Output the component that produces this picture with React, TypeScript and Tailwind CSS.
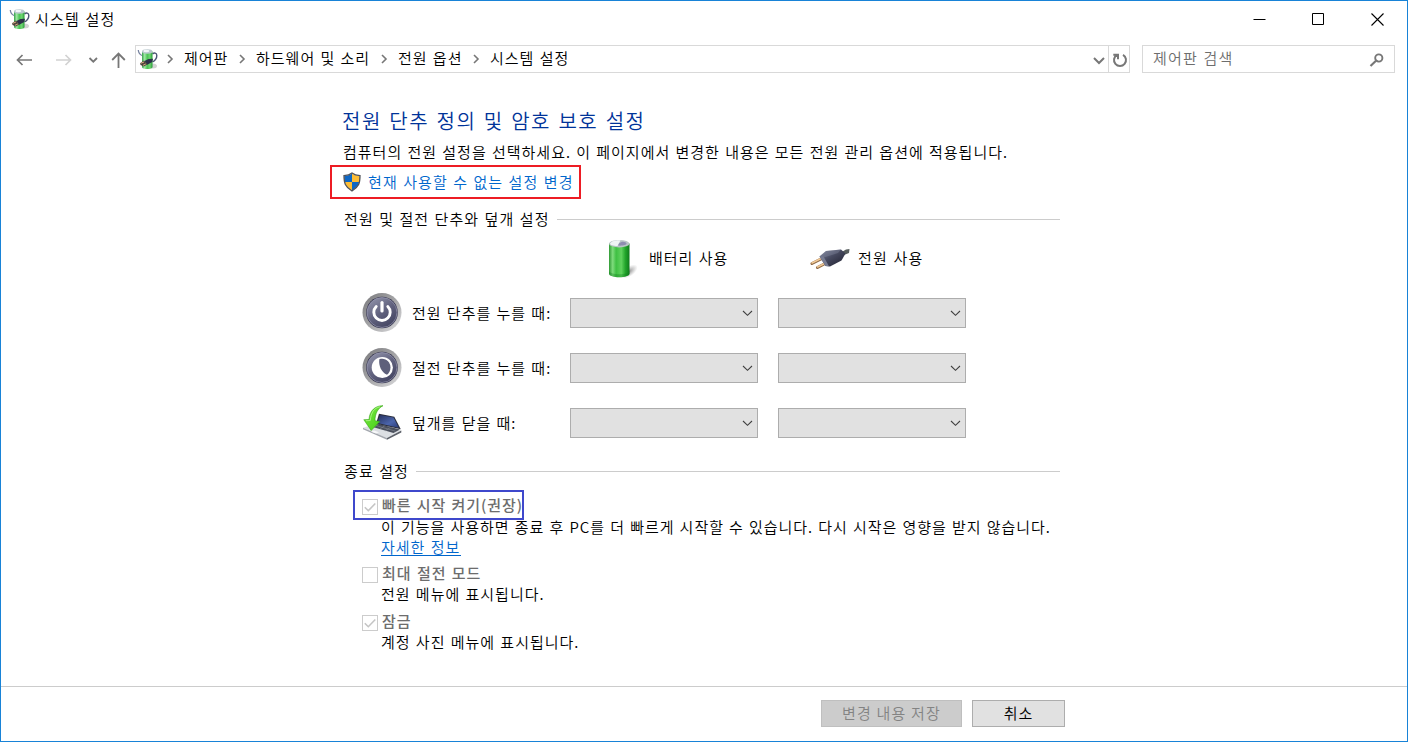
import React from 'react';

function Battery({ className }: { className?: string }) {
  return (
    <svg className={className} viewBox="0 0 32 40">
      <defs>
        <linearGradient id="bat" x1="0" x2="1">
          <stop offset="0" stopColor="#2f9a34" />
          <stop offset="0.18" stopColor="#7fdc7d" />
          <stop offset="0.35" stopColor="#3fc043" />
          <stop offset="0.6" stopColor="#5fd25d" />
          <stop offset="0.8" stopColor="#22a52b" />
          <stop offset="1" stopColor="#0f7a1c" />
        </linearGradient>
        <radialGradient id="batShadow">
          <stop offset="0" stopColor="#777" stopOpacity="0.8" />
          <stop offset="1" stopColor="#999" stopOpacity="0" />
        </radialGradient>
      </defs>
      <ellipse cx="22" cy="32.500" rx="10" ry="5" fill="url(#batShadow)" transform="rotate(-35 22 32.500)" />
      <path d="M2 4.500v30c0 5 20.500 5 20.500 0v-30z" fill="url(#bat)" />
      <path d="M2 34.500c0 5 20.500 5 20.500 0v-3c0 5-20.500 5-20.500 0z" fill="#128020" opacity=".35" />
      <ellipse cx="12.200" cy="4.700" rx="10.200" ry="3.700" fill="#b9c4c6" />
      <path d="M3 4.500C5 1 11 1 13.500 1.300l-3 5.700C6.500 7 3 6 3 4.500z" fill="#f0f4f5" />
      <path d="M12 4.500c3-3 7-1.500 7.500 0s-5 2.500-8.500 2z" fill="#8e8db0" />
    </svg>
  );
}

function Plug({ className }: { className?: string }) {
  return (
    <svg className={className} viewBox="0 0 40 24">
      <defs>
        <linearGradient id="plug" x1="0" y1="0" x2="1" y2="1">
          <stop offset="0" stopColor="#80859b" />
          <stop offset="0.45" stopColor="#46495f" />
          <stop offset="1" stopColor="#1d1e2c" />
        </linearGradient>
      </defs>
      <path d="M2 16.500 13 11M7.500 20.500 18 15" stroke="#8f6944" strokeWidth="3" strokeLinecap="round" />
      <path d="M2 16 12 11M7.500 20 17 15.200" stroke="#f0c997" strokeWidth="1.600" strokeLinecap="round" />
      <path d="M30 6 36 2.500 39.500 2 39 6 34 8z" fill="#565d5c" />
      <path d="M9.500 9.500 16 4 31 2.500 35.500 6.500 31.500 13.500 20 19.500 15.500 19z" fill="url(#plug)" />
      <path d="M9.500 9.500 16 4 31 2.500 28 6 14 10.500z" fill="#8a8fa5" opacity=".35" />
      <path d="M9.500 9.500 13.500 9.500 19 19.300 15.500 19z" fill="#777b91" />
    </svg>
  );
}

function PowerOptions({ className }: { className?: string }) {
  return (
    <svg className={className} viewBox="0 0 22 22">
      <defs>
        <linearGradient id="small" x1="0" x2="1">
          <stop offset="0" stopColor="#36a04a" />
          <stop offset="0.25" stopColor="#a0e8a4" />
          <stop offset="0.5" stopColor="#4cc455" />
          <stop offset="0.75" stopColor="#71d573" />
          <stop offset="1" stopColor="#239a35" />
        </linearGradient>
      </defs>
      <ellipse cx="15.500" cy="18" rx="4.500" ry="2.500" fill="#d2d2d2" />
      <path d="M1.300 2c.2 2.500 1.200 4.500 3.700 5.500" stroke="#7783a0" strokeWidth="1.300" fill="none" />
      <path d="M15.500 6c1.500-1.500 4.300-1.500 4.300 1.500 0 3-1.500 5-4.300 6.500" stroke="#4a5373" strokeWidth="1.400" fill="none" />
      <path d="M5 3.500v15.500c0 2.700 10.500 2.700 10.500 0V3.500z" fill="url(#small)" />
      <ellipse cx="10.200" cy="3.500" rx="5.200" ry="2.200" fill="#b9c7cd" />
      <ellipse cx="9.300" cy="3" rx="3" ry="1.200" fill="#f1f5f7" />
      <path d="m7.500 13 4-2 4.500-.3-.8 3.300-5 2.800z" fill="#2d3049" />
      <path d="M3 15.200 7 12.500l3.500 3.800L7 18.500l-3.500-1.500z" fill="#4f443e" />
      <path d="m3.700 15.300 3.300-1.300M6 17.300l2.800-1.300" stroke="#d9ae82" strokeWidth="1" />
    </svg>
  );
}

function RoundButton({ kind }: { kind: 'power' | 'sleep' }) {
  return (
    <svg className="size-10 shrink-0" viewBox="0 0 40 40">
      <defs>
        <linearGradient id="ring" x1="0" y1="0" x2="1" y2="1">
          <stop offset="0" stopColor="#77777a" />
          <stop offset="0.5" stopColor="#a5a5a7" />
          <stop offset="1" stopColor="#dedee0" />
        </linearGradient>
        <linearGradient id="face" x1="0.1" y1="0" x2="0.8" y2="1">
          <stop offset="0" stopColor="#9395ac" />
          <stop offset="0.5" stopColor="#62637f" />
          <stop offset="1" stopColor="#41425f" />
        </linearGradient>
      </defs>
      <circle cx="20" cy="19.500" r="19.500" fill="url(#ring)" />
      <circle cx="20" cy="19.500" r="15.800" fill="#303049" />
      <circle cx="20" cy="19.500" r="15" fill="url(#face)" stroke="#9b9bb5" strokeWidth=".7" />
      {kind === 'power' ? (
        <g fill="none" stroke="#fff" strokeLinecap="round">
          <path d="M14.200 13.500a8.200 8.200 0 1 0 11.600 0" strokeWidth="2.900" />
          <path d="M20 9.500v8.500" strokeWidth="3.200" />
        </g>
      ) : (
        <g>
          <circle cx="20.300" cy="19.500" r="10.600" fill="#fff" />
          <path d="M17.300 11.300c6-2 11 2.500 11.200 8 0 3.700-1.500 6-3.500 7.500C19.500 24.500 16.500 18 17.300 11.300z" fill="#5e607b" />
        </g>
      )}
    </svg>
  );
}

function Laptop() {
  return (
    <svg className="size-10 shrink-0" viewBox="0 0 40 40">
      <defs>
        <linearGradient id="screen" x1="0" y1="0" x2="1" y2="1">
          <stop offset="0" stopColor="#252f5b" />
          <stop offset="0.6" stopColor="#4b65ac" />
          <stop offset="1" stopColor="#2a3a78" />
        </linearGradient>
        <linearGradient id="arrow" x1="0" y1="0" x2="1" y2="1">
          <stop offset="0" stopColor="#7be84a" />
          <stop offset="1" stopColor="#43cf10" />
        </linearGradient>
      </defs>
      <path d="M1 24.700 14 20.500 39.300 27.500 25 35z" fill="#dcdfe3" />
      <path d="M1 24.700 25 35v1.800L1 26.200z" fill="#a3a7ae" />
      <path d="M25 35 39.300 27.500v2L25 36.800z" fill="#5c6069" />
      <path d="M15 20.500 38 26.500 31.500 30 9 23.500z" fill="#4a4f5c" />
      <path d="m12 22 21.500 6.200M17 21l-4 2.500m10-1-5 3.500m11-2-6 4" stroke="#8e949f" strokeWidth=".5" />
      <path d="m12 27.500 5 1.700-3 1.300-5-1.700z" fill="#f7f8f9" />
      <path d="M17 10.800 32.300 13.800 38.800 26.300 14 20.800z" fill="#2b2e3c" />
      <path d="M18 11.900 31.500 14.500 36.800 24.800 15.500 20z" fill="url(#screen)" />
      <path d="M21 2.700C13.500 2.500 7.500 7.500 7 16.500L1.800 16.700 9.200 27.500 17.800 18.500 13 17.700C13 11 15.500 5.500 21 2.700z" fill="url(#arrow)" stroke="#39a51a" strokeWidth=".6" />
      <path d="M18 3.800C12 5 9 9.500 8.300 17.500l-4.300.2" stroke="#a9f585" strokeWidth=".9" fill="none" />
    </svg>
  );
}

function Shield() {
  return (
    <svg className="h-5 w-[18px] shrink-0" viewBox="0 0 18 20">
      <clipPath id="half"><path d="M9 1.500C7 3 4 3.700 1.300 3.900c0 7 1 10.500 7.700 14.600 6.700-4.100 7.700-7.600 7.700-14.600C14 3.700 11 3 9 1.500z" /></clipPath>
      <g clipPath="url(#half)">
        <path d="M0 0h9v10H0z" fill="#0d67c5" />
        <path d="M9 0h9v10H9zM0 10h9v10H0z" fill="#fdbd35" />
        <path d="M9 10h9v10H9z" fill="#0d67c5" />
      </g>
      <path d="M9 1C7 2.700 4 3.500 1 3.600c0 7.400 1 11.200 8 15.400 7-4.200 8-8 8-15.400C14 3.500 11 2.700 9 1z" fill="none" stroke="#50535a" strokeWidth="1.300" />
    </svg>
  );
}

function Crumb({ children, className }: { children: string; className: string }) {
  return (
    <span className={'flex items-center ' + className}>
      <svg className="mr-2 mt-0.5 size-3" viewBox="0 0 12 12" fill="none" stroke="#777" strokeWidth="1.600"><path d="m4 2 4 4-4 4" /></svg>
      <span>{children}</span>
    </span>
  );
}

function Combo() {
  return (
    <div className="flex h-[30px] w-[188px] shrink-0 items-center justify-end border border-[#adadad] bg-[#e1e1e1] pr-1">
      <svg className="h-2.5 w-[11px]" viewBox="0 0 11 10" fill="none" stroke="#404040" strokeWidth="1.100"><path d="M1 3 5.500 7.300 10 3" /></svg>
    </div>
  );
}

function SettingRow({ icon, label }: { icon: React.ReactNode; label: string }) {
  return (
    <div className="mb-px flex h-[54px] items-center pl-[19px]">
      {icon}
      <span className="ml-[10px] w-[158px] pb-px">{label}</span>
      <div className="flex gap-5"><Combo /><Combo /></div>
    </div>
  );
}

function Check({ checked }: { checked?: boolean }) {
  return (
    <span className="flex size-4 shrink-0 items-center justify-center border border-[#ccc]">
      {checked && <svg className="size-3.5" viewBox="0 0 14 14" fill="none" stroke="#c5c5c5" strokeWidth="1.600"><path d="m1.800 7.200 3.500 3.500 7-7.200" /></svg>}
    </span>
  );
}

function Section({ children, className }: { children: string; className: string }) {
  return (
    <div className={'flex w-[717px] items-center ' + className}>
      <span className="ml-px pb-px pr-[7px] tracking-[1.1px]">{children}</span>
      <span className="h-px flex-1 bg-[#ccc]" />
    </div>
  );
}

export default function App() {
  return (
    <div className="flex h-[742px] w-[1408px] flex-col overflow-hidden whitespace-nowrap border border-[#1883d7] bg-white font-['Noto_Sans_CJK_KR',sans-serif] text-[15px] font-[350] leading-5 tracking-[1px] text-black [word-spacing:0.9px]">
      <header className="flex h-[37px] items-center justify-between pl-2">
        <div className="flex items-center pb-px">
          <PowerOptions className="size-[22px]" />
          <span className="ml-1 pb-px tracking-[1.200px]">시스템 설정</span>
        </div>
        <div className="flex items-center gap-[46px] pb-px pr-[23px]">
          <svg className="size-[13px]" viewBox="0 0 13 13"><path d="M.500 6.500h12" stroke="#000" /></svg>
          <svg className="size-[13px]" viewBox="0 0 13 13"><path d="M.5.500h11v11H.5z" stroke="#000" fill="none" /></svg>
          <svg className="size-[13px]" viewBox="0 0 13 13"><path d="m.5.500 12 12m0-12-12 12" stroke="#000" strokeWidth="1.100" /></svg>
        </div>
      </header>

      <nav className="mt-[7px] flex h-7 items-center">
        <svg className="ml-[15px] h-4 w-[17px]" viewBox="0 0 17 16" fill="none" stroke="#777" strokeWidth="1.700"><path d="M1.500 9H16M6.500 4 1.500 9l5 5" /></svg>
        <svg className="ml-[22px] h-4 w-[17px]" viewBox="0 0 17 16" fill="none" stroke="#d2d2d2" strokeWidth="1.700"><path d="M1 9h14.500M10.500 4l5 5-5 5" /></svg>
        <svg className="ml-[16px] size-2.5" viewBox="0 0 10 10" fill="none" stroke="#777" strokeWidth="1.800"><path d="M1.500 4 5.300 7.700 9 4" /></svg>
        <svg className="ml-[13px] h-[17px] w-[15px]" viewBox="0 0 15 17" fill="none" stroke="#777" strokeWidth="1.800"><path d="M7.500 17V3M1.200 9l6.300-6.500L13.800 9" /></svg>
        <div className="ml-[9px] flex h-7 w-[995px] items-center border border-[#d9d9d9]">
          <PowerOptions className="ml-px size-[22px]" />
          <div className="flex items-center pb-0.5">
            <Crumb className="ml-[5px] w-[72px]">제어판</Crumb>
            <Crumb className="w-[142px]">하드웨어 및 소리</Crumb>
            <Crumb className="w-[92px]">전원 옵션</Crumb>
            <Crumb className="">시스템 설정</Crumb>
          </div>
          <svg className="ml-auto mr-[3px] mt-px h-3 w-3" viewBox="0 0 12 12" fill="none" stroke="#777" strokeWidth="2"><path d="m1 4 5 5 5-5" /></svg>
          <div className="flex h-full w-[21px] items-center justify-center border-l border-[#d9d9d9]">
            <svg className="mt-1 ml-px size-4" viewBox="0 0 16 16" fill="none" stroke="#777" strokeWidth="2"><path d="M11 1.800a6 6 0 1 1-6 0M1.300 1.700h4.700V6.200" /></svg>
          </div>
        </div>
        <div className="ml-3 flex h-7 w-[253px] items-center justify-between border border-[#d9d9d9] pr-2.5 text-[#6d6d6d]">
          <span className="pb-[2px] pl-2.5 tracking-[1.200px]">제어판 검색</span>
          <svg className="mt-0.5 size-[15px]" viewBox="0 0 15 15" fill="none" stroke="#777"><circle cx="9.800" cy="5" r="3.600" strokeWidth="1.900" /><path d="M7 7.800 1.500 13" strokeWidth="2.200" /></svg>
        </div>
      </nav>

      <main className="ml-[342px] flex w-[740px] flex-1 flex-col">
        <h1 className="-ml-px mt-8 h-8 text-[20px] leading-[31px] tracking-[1.500px] text-[#003399] [word-spacing:1.500px]">전원 단추 정의 및 암호 보호 설정</h1>
        <p className="h-7 pt-[5px]">컴퓨터의 전원 설정을 선택하세요. 이 페이지에서 변경한 내용은 모든 전원 관리 옵션에 적용됩니다.</p>
        <div className="-ml-[13px] flex h-[34px] w-[251px] items-center border-2 border-[#ed1c24] pl-[11px] tracking-[1.100px] text-[#0066cc]">
          <Shield />
          <span className="ml-[7px] pb-px">현재 사용할 수 없는 설정 변경</span>
        </div>
        <Section className="h-[41px]">전원 및 절전 단추와 덮개 설정</Section>
        <div className="flex h-[37px] items-center pl-[264px]">
          <Battery className="h-10 w-8" />
          <span className="ml-[10px] w-[161px] pb-px">배터리 사용</span>
          <Plug className="h-6 w-10" />
          <span className="ml-[8px] pb-px tracking-[1.200px]">전원 사용</span>
        </div>
        <div className="mt-[9px]">
          <SettingRow icon={<RoundButton kind="power" />} label="전원 단추를 누를 때:" />
          <SettingRow icon={<RoundButton kind="sleep" />} label="절전 단추를 누를 때:" />
          <SettingRow icon={<Laptop />} label="덮개를 닫을 때:" />
        </div>
        <Section className="h-[39px] pt-[2px]">종료 설정</Section>
        <div className="ml-[10px] flex h-[30px] w-[171px] items-center border-2 border-[#3f48cc] pl-[7px] font-medium tracking-[0.950px] text-[#6d6d6d]">
          <span className="pt-1"><Check checked /></span>
          <span className="ml-1 pb-px">빠른 시작 켜기(권장)</span>
        </div>
        <div className="pl-[38px]">
          <p className="-mt-[3px] h-5 tracking-[0.960px]">이 기능을 사용하면 종료 후 PC를 더 빠르게 시작할 수 있습니다. 다시 시작은 영향을 받지 않습니다.</p>
          <a className="block h-[19px] w-20 border-b border-[#0066cc] text-[#0066cc]">자세한 정보</a>
        </div>
        <div className="mt-[7px] flex h-5 items-center pl-[19px] font-medium text-[#6d6d6d]">
          <span className="pt-[3px]"><Check /></span>
          <span className="ml-1 pb-px">최대 절전 모드</span>
        </div>
        <p className="mt-px h-[21px] pl-[38px]">전원 메뉴에 표시됩니다.</p>
        <div className="mt-[6px] flex h-5 items-center pl-[19px] font-medium text-[#6d6d6d]">
          <span className="pt-[3px]"><Check checked /></span>
          <span className="ml-1 pb-px">잠금</span>
        </div>
        <p className="mt-px h-[21px] pl-[38px]">계정 사진 메뉴에 표시됩니다.</p>
      </main>

      <footer className="flex h-[55px] gap-2.5 border-t border-[#ccc] pl-[820px] pt-[13px]">
        <button className="h-[27px] w-[141px] border border-[#bfbfbf] bg-[#ccc] pb-0.5 leading-[21px] tracking-[1.200px] text-[#838383]">변경 내용 저장</button>
        <button className="h-[27px] w-[93px] border border-[#adadad] bg-[#e1e1e1] pb-0.5 leading-[21px]">취소</button>
      </footer>
    </div>
  );
}
